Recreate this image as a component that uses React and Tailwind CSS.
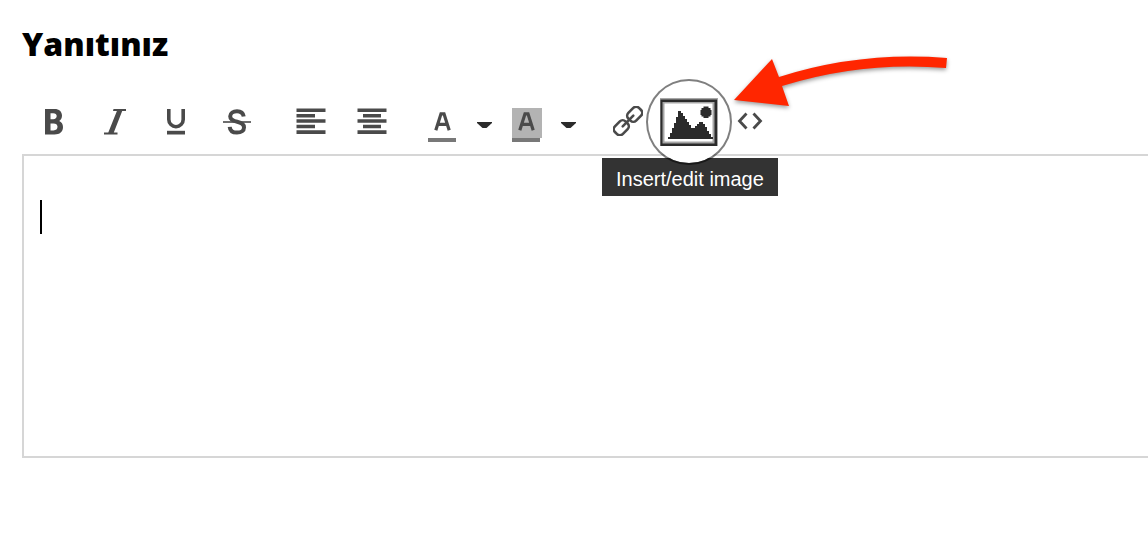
const ICON = '#4a4a4a';

const BoldIcon = () => (
  <svg width="18" height="28" viewBox="0 -2 18 28" aria-hidden="true">
    <path
      fill={ICON}
      fillRule="evenodd"
      d="M0 0h9.500C14.200 0 17 2.600 17 6.600c0 2.500-1 4.400-2.800 5.400 2.400 1 3.800 3.200 3.800 6 0 4.800-3.300 7.500-8.500 7.500H0zM5.500 4.200v6h2.700c2.200 0 3.500-1.200 3.500-3.100s-1.300-2.900-3.500-2.900zM5.500 14.400v7h3c2.500 0 4-1.300 4-3.600s-1.500-3.400-4-3.400z"
    />
  </svg>
);

const ItalicIcon = () => (
  <svg width="22" height="28" viewBox="0 -2 22 28" aria-hidden="true">
    <path fill={ICON} d="M9.500 0H22v2h-3.800L9.800 23.500h3.700v2H0v-2h4.300L12.900 2H9z" />
  </svg>
);

const UnderlineIcon = () => (
  <svg width="20" height="28" viewBox="0 -2 20 28" aria-hidden="true">
    <path d="M2.800 0v10.500a7.200 7.200 0 0 0 14.400 0V0" fill="none" stroke={ICON} strokeWidth="3.600" />
    <path d="M1 21.800h18v3.700H1z" fill={ICON} />
  </svg>
);

const StrikeIcon = () => (
  <svg width="30" height="28" viewBox="0 -2 30 28" aria-hidden="true">
    <path
      d="M21.700 7.500C21.200 4 18.800 2.200 15 2.200S8.200 4 8.200 7.300c0 3 2.200 4.500 7 5.500s6.800 2.600 6.800 5.600c0 3.200-2.700 5.200-7 5.200s-7-2.200-7.300-5.800"
      fill="none"
      stroke={ICON}
      strokeWidth="4"
    />
    <path d="M1 13h28" stroke={ICON} strokeWidth="1.600" />
  </svg>
);

const AlignLeftIcon = () => (
  <svg width="30" height="26" viewBox="0 0 30 26" aria-hidden="true">
    <path fill={ICON} d="M0.500 0.500h29v3.500h-29zM0.500 6h18.500v3.500H0.500zM0.500 11.300h29v3.500h-29zM0.500 16.800h18.500v3.500H0.500zM0.500 22.200h29V26h-29z" />
  </svg>
);

const AlignCenterIcon = () => (
  <svg width="30" height="26" viewBox="0 0 30 26" aria-hidden="true">
    <path fill={ICON} d="M0.500 0.500h29v3.500h-29zM6 6h18v3.500H6zM0.500 11.300h29v3.500h-29zM6 16.800h18v3.500H6zM0.500 22.200h29V26h-29z" />
  </svg>
);

const LetterIcon = ({ filled }) => (
  <svg width="30" height="34" viewBox="0 0 30 34" aria-hidden="true">
    {filled && <path d="M0 0h30v30H0z" fill="#b3b3b3" />}
    <path d="M0 30h28v4H0z" fill="#787878" />
    <path
      d="M7.800 22.200 13 5.800h3l5.200 16.400M9.500 16.300h10"
      fill="none"
      stroke={ICON}
      strokeWidth="3.200"
    />
  </svg>
);

const CaretIcon = () => (
  <svg width="16" height="8" viewBox="0 0 16 8" aria-hidden="true">
    <path d="M0 1h15v1L9.500 7h-4L0 2z" fill="#2b2b2b" />
  </svg>
);

const LinkIcon = () => (
  <svg width="30" height="30" viewBox="0 0 30 30" fill="none" stroke={ICON} strokeWidth="2.600" aria-hidden="true">
    <g transform="rotate(-45 15 15)">
      <rect x="-2" y="9.500" width="15" height="11" rx="4" />
      <rect x="17" y="9.500" width="15" height="11" rx="4" />
      <path d="M7.500 15h15" strokeLinecap="round" />
    </g>
  </svg>
);

const CodeIcon = () => (
  <svg width="26" height="20" viewBox="0 -1 26 20" fill="none" stroke={ICON} strokeWidth="2.800" aria-hidden="true">
    <path d="M9.500 1.500 2.500 9l7 7.500M16.500 1.500l7 7.500-7 7.500" />
  </svg>
);

const ImageIcon = () => (
  <svg width="58" height="48" viewBox="0 0 58 48" aria-hidden="true">
    <path d="M0 0h58v48H0z" fill="#a6a6a6" />
    <path d="M0.500 1.500h56.500V48H0.500z" fill="#2b2b2b" />
    <path d="M2.500 4h52v41.500h-52z" fill="#a6a6a6" />
    <path d="M4.500 5.500h48V43.500h-48z" fill="#fff" />
    <path
      d="M8 41v-2h2v-4h2v-5h2v-5h2v-6h2v-6h3v2h2v3h2v3h2v3h2v3h2v3h4v-2h2v-2h2v-2h4v2h2v3h2v4h2v3h2v3h2v2z"
      fill="#2b2b2b"
    />
    <path d="M43.500 8.500h5v1.500h2v2h1v5h-1v1.500h-2V20h-5v-1.500h-2V17h-1v-5h1v-2h2z" fill="#2b2b2b" />
  </svg>
);

const ToolButton = ({ label, children }) => (
  <button type="button" aria-label={label} className="flex h-15 w-[61px] items-center justify-center">
    {children}
  </button>
);

const SplitButton = ({ label, children }) => (
  <div className="flex">
    <button type="button" aria-label={label} className="flex h-15 w-14 items-center justify-center pt-2">
      {children}
    </button>
    <button type="button" aria-label={`${label} options`} className="flex h-15 w-7 items-center justify-center pt-2">
      <CaretIcon />
    </button>
  </div>
);

// Red pointer that calls out the image button
const Pointer = () => (
  <svg
    className="pointer-events-none absolute bottom-10 left-16 drop-shadow-[0_2px_2px_rgba(0,0,0,0.4)]"
    width="230"
    height="60"
    viewBox="0 0 230 60"
    aria-hidden="true"
  >
    <path d="M12 49 50 8l7 18Q138 0 225 7l-1 10Q140 10 60 35l7 20z" fill="#ff2600" />
  </svg>
);

const ImageButton = () => (
  <div className="relative z-10 w-[61px]">
    <button
      type="button"
      aria-describedby="image-tip"
      aria-label="Insert/edit image"
      className="absolute -left-3 -top-3 flex size-[86px] items-center justify-center rounded-full border-2 border-black/50 bg-white bg-clip-padding"
    >
      <ImageIcon />
    </button>
    <div
      id="image-tip"
      role="tooltip"
      className="absolute -left-14 top-[67px] -z-10 bg-[#333333] px-[14px] pt-[10px] pb-[6px] text-xl leading-[22px] whitespace-nowrap text-white"
    >
      Insert/edit image
    </div>
    <Pointer />
  </div>
);

export default function App() {
  return (
    <main className="min-h-screen overflow-hidden bg-white pt-6 pl-[22px] font-['Liberation_Sans',Arial,sans-serif]">
      <h1 className="font-['Open_Sans',sans-serif] text-[32px] leading-10 font-extrabold text-black">
        <label htmlFor="answer">Yanıtınız</label>
      </h1>

      <div role="toolbar" aria-label="Formatting" className="flex pt-[27px] pl-px">
        <div className="flex">
          <ToolButton label="Bold"><BoldIcon /></ToolButton>
          <ToolButton label="Italic"><ItalicIcon /></ToolButton>
          <ToolButton label="Underline"><UnderlineIcon /></ToolButton>
          <ToolButton label="Strikethrough"><StrikeIcon /></ToolButton>
        </div>
        <div className="ml-[13px] flex">
          <ToolButton label="Align left"><AlignLeftIcon /></ToolButton>
          <ToolButton label="Align center"><AlignCenterIcon /></ToolButton>
        </div>
        <div className="ml-[13px] flex">
          <SplitButton label="Text color"><LetterIcon /></SplitButton>
          <SplitButton label="Background color"><LetterIcon filled /></SplitButton>
        </div>
        <div className="ml-[14px] flex">
          <ToolButton label="Insert/edit link"><LinkIcon /></ToolButton>
          <ImageButton />
          <ToolButton label="Source code"><CodeIcon /></ToolButton>
        </div>
      </div>

      <div className="relative mt-[3px] border-2 border-r-0 border-[#d6d6d6]">
        <textarea
          id="answer"
          className="block h-75 w-full resize-none bg-transparent px-4 py-11 text-2xl outline-none"
        />
        <span className="pointer-events-none absolute top-11 left-4 h-[34px] w-[2px] bg-black" />
      </div>
    </main>
  );
}
